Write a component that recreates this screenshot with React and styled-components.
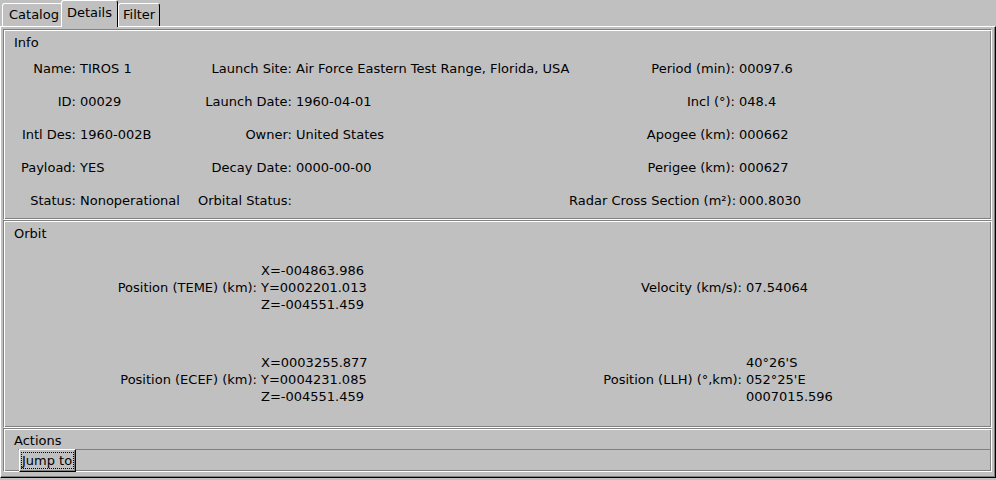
import styled, { createGlobalStyle } from "styled-components"

const GlobalStyle = createGlobalStyle`
  html, body {
    margin: 0;
    padding: 0;
    background: #c0c0c0;
    overflow: hidden;
  }
  body {
    font-family: "DejaVu Sans", "Liberation Sans", sans-serif;
    font-size: 13px;
    color: #000;
  }
`

const infoRows = [
  ["Name:", "TIROS 1", "Launch Site:", "Air Force Eastern Test Range, Florida, USA", "Period (min):", "00097.6"],
  ["ID:", "00029", "Launch Date:", "1960-04-01", "Incl (°):", "048.4"],
  ["Intl Des:", "1960-002B", "Owner:", "United States", "Apogee (km):", "000662"],
  ["Payload:", "YES", "Decay Date:", "0000-00-00", "Perigee (km):", "000627"],
  ["Status:", "Nonoperational", "Orbital Status:", "", "Radar Cross Section (m²):", "000.8030"],
]

const orbitRows = [
  {
    left: "Position (TEME) (km):",
    leftVal: ["X=-004863.986", "Y=0002201.013", "Z=-004551.459"],
    right: "Velocity (km/s):",
    rightVal: ["07.54064"],
  },
  {
    left: "Position (ECEF) (km):",
    leftVal: ["X=0003255.877", "Y=0004231.085", "Z=-004551.459"],
    right: "Position (LLH) (°,km):",
    rightVal: ["40°26'S", "052°25'E", "0007015.596"],
  },
]

export default function App() {
  return (
    <>
      <GlobalStyle />
      <Window>
        <TabBar>
          <Tab>Catalog</Tab>
          <Tab $selected>Details</Tab>
          <Tab $last>Filter</Tab>
        </TabBar>
        <Pane>
          <GroupFrame $height={191}>
            <FrameTitle>Info</FrameTitle>
            <InfoGrid>
              {infoRows.map((row, i) => (
                <InfoRow key={i}>
                  <Label>{row[0]}</Label>
                  <Value>{row[1]}</Value>
                  <Label>{row[2]}</Label>
                  <Value>{row[3]}</Value>
                  <Label>{row[4]}</Label>
                  <Value>{row[5]}</Value>
                </InfoRow>
              ))}
            </InfoGrid>
          </GroupFrame>

          <GroupFrame $height={208}>
            <FrameTitle>Orbit</FrameTitle>
            <OrbitGrid>
              {orbitRows.map((row, i) => (
                <OrbitRow key={i}>
                  <Label>{row.left}</Label>
                  <MultiValue>
                    {row.leftVal.map((l) => <div key={l}>{l}</div>)}
                  </MultiValue>
                  <Label>{row.right}</Label>
                  <MultiValue>
                    {row.rightVal.map((l) => <div key={l}>{l}</div>)}
                  </MultiValue>
                </OrbitRow>
              ))}
            </OrbitGrid>
          </GroupFrame>

          <GroupFrame $height={44}>
            <ActionsTitle>Actions</ActionsTitle>
            <ActionRow>
              <TkButton>
                <FocusRing>Jump to</FocusRing>
              </TkButton>
            </ActionRow>
          </GroupFrame>
        </Pane>
      </Window>
    </>
  )
}

const Window = styled.div`
  width: 996px;
  height: 480px;
  display: flex;
  flex-direction: column;
`
const TabBar = styled.div`
  height: 26px;
  display: flex;
  align-items: flex-end;
  padding-left: 2px;
  position: relative;
  z-index: 1;
`
const Tab = styled.div`
  box-sizing: border-box;
  position: relative;
  z-index: ${(p) => (p.$selected ? 2 : 1)};
  height: ${(p) => (p.$selected ? "27px" : "23px")};
  margin: ${(p) => (p.$selected ? "0 0 -1px -2px" : "0")};
  padding: ${(p) =>
    p.$selected ? "3px 5px 0 5px" : p.$last ? "2px 4px 0 4px" : "2px 3px 0 6px"};
  border: 1px solid;
  border-color: #fff #000 transparent #fff;
  border-bottom: none;
  border-radius: 3px 3px 0 0;
  background: #c0c0c0;
  line-height: 17px;
  white-space: nowrap;
`
const Pane = styled.div`
  box-sizing: border-box;
  width: 996px;
  height: 452px;
  border: 1px solid;
  border-color: #fff #000 #000 #fff;
  box-shadow: inset -1px -1px #808080;
  padding: 2px 3px 4px 2px;
  display: flex;
  flex-direction: column;
`
const GroupFrame = styled.section`
  box-sizing: border-box;
  height: ${(p) => p.$height}px;
  flex: none;
  border: 1px solid;
  border-color: #808080 #fff #fff #808080;
  box-shadow: inset 1px 1px #fff, inset -1px -1px #808080;
  padding: 1px;
  display: flex;
  flex-direction: column;
`
const FrameTitle = styled.div`
  height: 20px;
  line-height: 17px;
  padding: 3px 0 0 9px;
  box-sizing: border-box;
`
const ActionsTitle = styled(FrameTitle)`
  height: 19px;
  padding-top: 2px;
`
const InfoGrid = styled.div`
  display: flex;
  flex-direction: column;
  padding-top: 1px;
`
const InfoRow = styled.div`
  height: 33px;
  display: grid;
  grid-template-columns: 71px 120px 96px 277px 166px 1fr;
  align-items: center;
`
const Label = styled.div`
  text-align: right;
  white-space: nowrap;
`
const Value = styled.div`
  padding-left: 4px;
  white-space: nowrap;
`
const OrbitGrid = styled.div`
  flex: 1;
  display: flex;
  flex-direction: column;
`
const OrbitRow = styled.div`
  flex: 1;
  display: grid;
  grid-template-columns: 252px 300px 185px 1fr;
  align-items: center;
  &:first-child {
    flex: none;
    height: 90px;
  }
`
const MultiValue = styled.div`
  padding-left: 4px;
  line-height: 17px;
  white-space: nowrap;
`
const ActionRow = styled.div`
  flex: 1;
  margin-left: 13px;
  border-top: 1px solid #808080;
  display: flex;
  align-items: flex-start;
`
const TkButton = styled.button`
  box-sizing: border-box;
  height: 23px;
  margin: -1px 0 0 1px;
  padding: 0 1px;
  background: #c0c0c0;
  font: inherit;
  color: #000;
  border: 1px solid;
  border-color: #fff #000 #000 #fff;
  box-shadow: inset -1px -1px #808080;
  border-radius: 0;
  display: flex;
  align-items: center;
`
const FocusRing = styled.span`
  border: 1px dotted #000;
  padding: 0 1px 0 0;
  line-height: 15px;
`
